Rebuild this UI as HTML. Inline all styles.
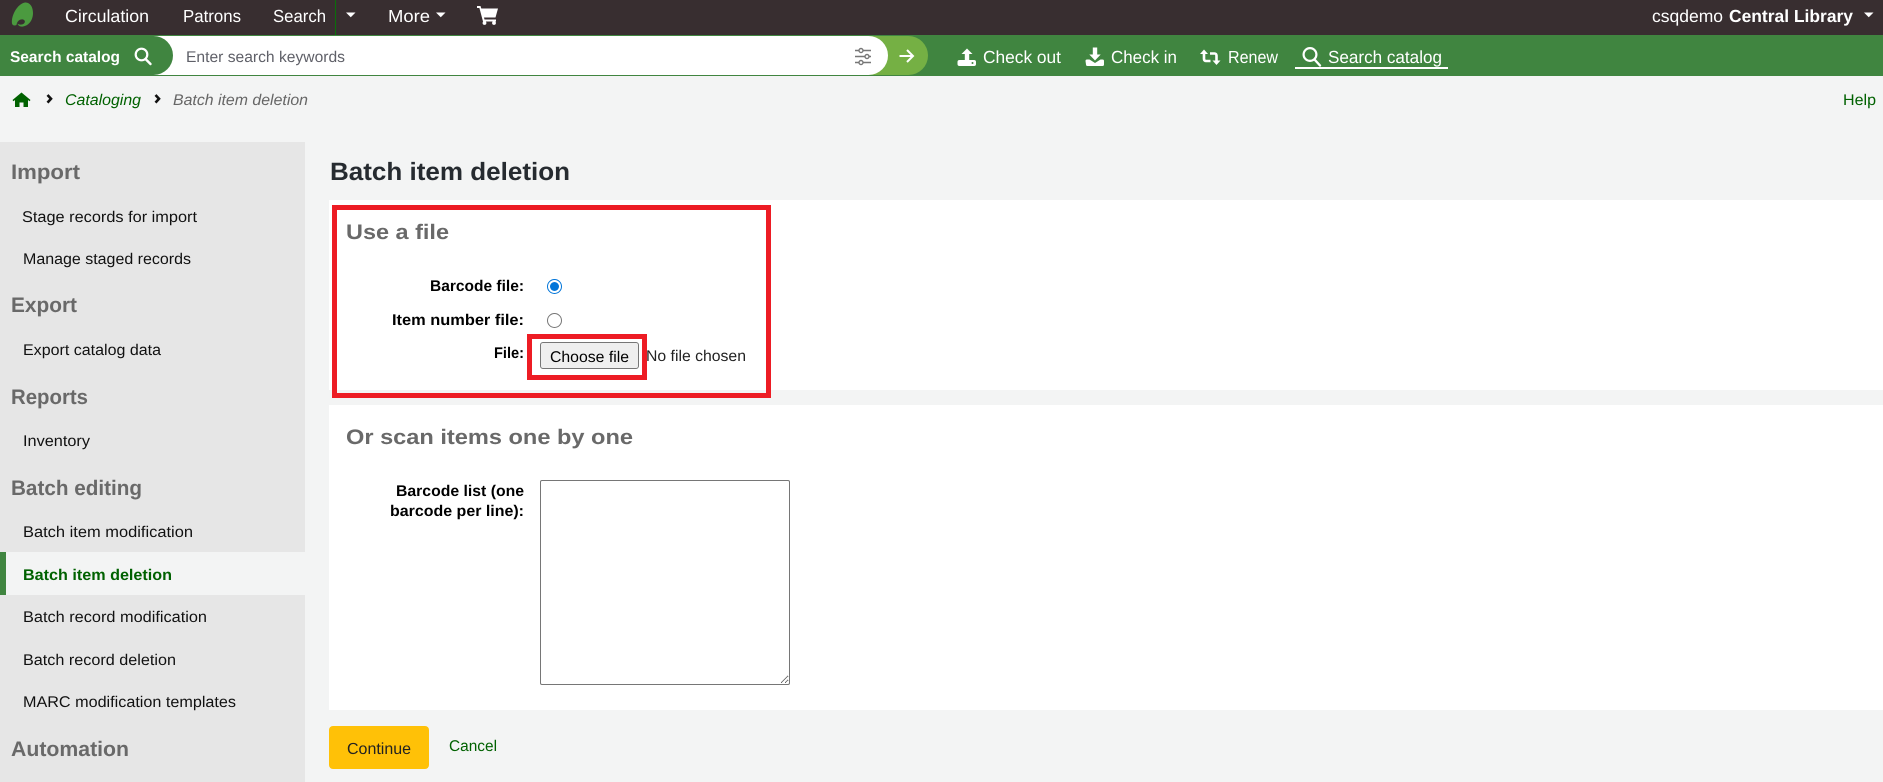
<!DOCTYPE html>
<html lang="en">
<head>
<meta charset="utf-8">
<title>Batch item deletion</title>
<style>
html,body{margin:0;padding:0;width:1883px;height:782px;overflow:hidden;background:#f3f4f4;font-family:"Liberation Sans",sans-serif}
.b{position:absolute}
svg.o{position:absolute;left:0;top:0;width:1883px;height:782px;z-index:5;pointer-events:none}
svg text{font-family:"Liberation Sans",sans-serif;text-rendering:geometricPrecision}
.w{fill:#fff}
.nav{font-size:17.5px}
.side{font-size:15.5px;fill:#111}
.h{font-size:21px;font-weight:700;fill:#696969}
.lab{font-size:15.5px;font-weight:700;fill:#000}
input[type=radio]{position:absolute;margin:0;width:15px;height:15px;accent-color:#0075d9}
textarea{position:absolute;left:540px;top:480px;width:250px;height:205px;box-sizing:border-box;margin:0;padding:2px;border:1px solid #767676;border-radius:2px;background:#fff}
</style>
</head>
<body>
<div class="b" style="left:0;top:0;width:1883px;height:35px;background:#382e30"></div>
<div class="b" style="left:335px;top:0;width:1px;height:35px;background:#0a700a"></div>
<div class="b" style="left:0;top:35px;width:1883px;height:41px;background:#408540"></div>
<div class="b" style="left:150px;top:36px;width:778px;height:39px;background:#75b044;border-radius:0 20px 20px 0"></div>
<div class="b" style="left:150px;top:36px;width:738px;height:39px;background:#fff;border-radius:0 20px 20px 0"></div>
<div class="b" style="left:0;top:36px;width:173px;height:39px;background:#408540;border-radius:0 20px 20px 0"></div>

<div class="b" style="left:0;top:142px;width:305px;height:640px;background:#e6e6e6"></div>
<div class="b" style="left:0;top:552px;width:305px;height:43px;background:#f3f4f4"></div>
<div class="b" style="left:0;top:552px;width:6px;height:43px;background:#408540"></div>

<div class="b" style="left:329px;top:200px;width:1554px;height:190px;background:#fff"></div>
<div class="b" style="left:329px;top:405px;width:1554px;height:305px;background:#fff"></div>

<input type="radio" name="f" checked style="left:547px;top:279px">
<input type="radio" name="f" style="left:547px;top:313px">
<div class="b" style="left:540px;top:342px;width:99px;height:27px;box-sizing:border-box;background:#efefef;border:1px solid #767676;border-radius:3px"></div>
<textarea></textarea>
<div class="b" style="left:329px;top:726px;width:100px;height:43px;background:#ffc107;border-radius:4px"></div>

<div class="b" style="left:332px;top:205px;width:439px;height:193px;box-sizing:border-box;border:5px solid #ed1c24;z-index:4"></div>
<div class="b" style="left:527px;top:334px;width:120px;height:46px;box-sizing:border-box;border:5px solid #ed1c24;z-index:4"></div>

<svg class="o" viewBox="0 0 1883 782" xmlns="http://www.w3.org/2000/svg">
  <!-- logo -->
  <path d="M25 2.500C30 2 33 7 33 13C33 20 29 25.500 23 26.500C20 27 18 25.500 17.500 23.500C19 25 22 25 24 23.500C25.500 22 25 20 23 19.500C19.500 19 17 21.500 16.500 25C14.500 26 12.500 25.500 12 23.500C11 16 17 4 25 2.500Z" fill="#4b9a3f"/>

  <!-- top nav -->
  <g class="w nav">
    <text x="65" y="22" textLength="84" lengthAdjust="spacingAndGlyphs">Circulation</text>
    <text x="183" y="22" textLength="58" lengthAdjust="spacingAndGlyphs">Patrons</text>
    <text x="273" y="22" textLength="53" lengthAdjust="spacingAndGlyphs">Search</text>
    <text x="388" y="22" textLength="42" lengthAdjust="spacingAndGlyphs">More</text>
    <text x="1652" y="22" textLength="71" lengthAdjust="spacingAndGlyphs">csqdemo</text>
    <text x="1729" y="22" textLength="124" lengthAdjust="spacingAndGlyphs" font-weight="700">Central Library</text>
  </g>
  <path d="M346 12.500h9.500l-4.750 4.750zM436 12.500h9.500l-4.750 4.750zM1864 12.500h9.500l-4.750 4.750z" fill="#fff"/>
  <!-- cart -->
  <path d="M477 6h3.500l.8 2.500H498l-2.500 9H484l.5 2H496v2H483l-3.600-13.500H477z" fill="#fff"/>
  <circle cx="484.500" cy="23" r="1.900" fill="#fff"/><circle cx="494" cy="23" r="1.900" fill="#fff"/>

  <!-- search bar -->
  <text x="10" y="62" textLength="110" lengthAdjust="spacingAndGlyphs" font-size="15.500" font-weight="700" fill="#fff">Search catalog</text>
  <circle cx="141.500" cy="54.500" r="5.800" fill="none" stroke="#fff" stroke-width="2.200"/>
  <path d="M145.500 59l5 5" stroke="#fff" stroke-width="2.400" stroke-linecap="round"/>
  <text x="186" y="62" textLength="159" lengthAdjust="spacingAndGlyphs" font-size="15.500" fill="#5f6068">Enter search keywords</text>
  <!-- sliders -->
  <g stroke="#777" stroke-width="1.400" fill="none">
    <path d="M855 50.500h16M855 56.500h16M855 62.500h16"/>
    <circle cx="861" cy="50.500" r="2" fill="#fff"/><circle cx="867" cy="56.500" r="2" fill="#fff"/><circle cx="861" cy="62.500" r="2" fill="#fff"/>
  </g>
  <path d="M899.500 56h13M907 50l6 6-6 6" fill="none" stroke="#fff" stroke-width="2"/>

  <!-- toolbar -->
  <g class="w" font-size="17.500">
    <text x="983" y="63" textLength="78" lengthAdjust="spacingAndGlyphs">Check out</text>
    <text x="1111" y="63" textLength="66" lengthAdjust="spacingAndGlyphs">Check in</text>
    <text x="1228" y="63" textLength="50" lengthAdjust="spacingAndGlyphs">Renew</text>
    <text x="1328" y="63" textLength="114" lengthAdjust="spacingAndGlyphs">Search catalog</text>
  </g>
  <!-- check out -->
  <path d="M967 48.500l5.500 5.500h-3.300v7h-4.400v-7h-3.300z" fill="#fff"/>
  <rect x="957.500" y="60" width="18.500" height="6" rx="2" fill="#fff"/><circle cx="972.500" cy="63" r="1" fill="#408540"/>
  <!-- check in -->
  <path d="M1092.800 47.500h4.400v7h3.500l-5.700 6-5.700-6h3.500z" fill="#fff"/>
  <path d="M1085.500 61a1.500 1.500 0 0 1 1.500-1.500h2.500l5.500 3.500 5.500-3.500h2a1.500 1.500 0 0 1 1.500 1.500v3.500a1.500 1.500 0 0 1-1.500 1.500h-15a1.500 1.500 0 0 1-1.500-1.500z" fill="#fff"/>
  <!-- renew -->
  <path d="M1204 52v7a2 2 0 0 0 2 2h4.500M1216.500 62.500v-7a2 2 0 0 0-2-2h-4.500" fill="none" stroke="#fff" stroke-width="2.600"/>
  <path d="M1200 54l4-4.500 4 4.500zM1212.500 60.500l4 4.500 4-4.500z" fill="#fff"/>
  <!-- search -->
  <circle cx="1310" cy="54.500" r="6.400" fill="none" stroke="#fff" stroke-width="2.200"/>
  <path d="M1314.500 59.500l5.500 6" stroke="#fff" stroke-width="2.400" stroke-linecap="round"/>
  <rect x="1295" y="67" width="153" height="2" fill="#fff"/>

  <!-- breadcrumb -->
  <path d="M21.500 92.500l9 7.500-1 1.200-1.500-1.200v7h-4.500v-4.500h-4v4.500H15v-7l-1.500 1.200-1-1.200z" fill="#006100"/>
  <path d="M47.500 95l3.500 3.800-3.500 3.800M155.500 95l3.500 3.800-3.500 3.800" fill="none" stroke="#111" stroke-width="2.600"/>
  <text x="65" y="105" textLength="76" lengthAdjust="spacingAndGlyphs" font-size="15.500" font-style="italic" fill="#006100">Cataloging</text>
  <text x="173" y="105" textLength="135" lengthAdjust="spacingAndGlyphs" font-size="15.500" font-style="italic" fill="#666">Batch item deletion</text>
  <text x="1843" y="105" textLength="33" lengthAdjust="spacingAndGlyphs" font-size="15.500" fill="#006100">Help</text>

  <!-- sidebar -->
  <text class="h" x="11" y="179" textLength="69" lengthAdjust="spacingAndGlyphs">Import</text>
  <text class="side" x="22" y="222" textLength="175" lengthAdjust="spacingAndGlyphs">Stage records for import</text>
  <text class="side" x="23" y="264" textLength="168" lengthAdjust="spacingAndGlyphs">Manage staged records</text>
  <text class="h" x="11" y="312" textLength="66" lengthAdjust="spacingAndGlyphs">Export</text>
  <text class="side" x="23" y="355" textLength="138" lengthAdjust="spacingAndGlyphs">Export catalog data</text>
  <text class="h" x="11" y="404" textLength="77" lengthAdjust="spacingAndGlyphs">Reports</text>
  <text class="side" x="23" y="446" textLength="67" lengthAdjust="spacingAndGlyphs">Inventory</text>
  <text class="h" x="11" y="495" textLength="131" lengthAdjust="spacingAndGlyphs">Batch editing</text>
  <text class="side" x="23" y="537" textLength="170" lengthAdjust="spacingAndGlyphs">Batch item modification</text>
  <text x="23" y="580" textLength="149" lengthAdjust="spacingAndGlyphs" font-size="15.500" font-weight="700" fill="#006100">Batch item deletion</text>
  <text class="side" x="23" y="622" textLength="184" lengthAdjust="spacingAndGlyphs">Batch record modification</text>
  <text class="side" x="23" y="665" textLength="153" lengthAdjust="spacingAndGlyphs">Batch record deletion</text>
  <text class="side" x="23" y="707" textLength="213" lengthAdjust="spacingAndGlyphs">MARC modification templates</text>
  <text class="h" x="11" y="756" textLength="118" lengthAdjust="spacingAndGlyphs">Automation</text>

  <!-- main -->
  <text x="330" y="180" textLength="240" lengthAdjust="spacingAndGlyphs" font-size="25" font-weight="700" fill="#262b30">Batch item deletion</text>
  <text class="h" x="346" y="239" textLength="103" lengthAdjust="spacingAndGlyphs" font-size="21">Use a file</text>
  <text class="lab" x="430" y="291" textLength="94" lengthAdjust="spacingAndGlyphs">Barcode file:</text>
  <text class="lab" x="392" y="325" textLength="132" lengthAdjust="spacingAndGlyphs">Item number file:</text>
  <text class="lab" x="494" y="358" textLength="30" lengthAdjust="spacingAndGlyphs">File:</text>
  <text x="550" y="362" textLength="79" lengthAdjust="spacingAndGlyphs" font-size="15.500" fill="#000">Choose file</text>
  <text x="646" y="361" textLength="100" lengthAdjust="spacingAndGlyphs" font-size="15.500" fill="#222">No file chosen</text>
  <text class="h" x="346" y="444" textLength="287" lengthAdjust="spacingAndGlyphs">Or scan items one by one</text>
  <text class="lab" x="396" y="496" textLength="128" lengthAdjust="spacingAndGlyphs">Barcode list (one</text>
  <text class="lab" x="390" y="516" textLength="134" lengthAdjust="spacingAndGlyphs">barcode per line):</text>
  <text x="347" y="754" textLength="64" lengthAdjust="spacingAndGlyphs" font-size="16" fill="#222">Continue</text>
  <text x="449" y="751" textLength="48" lengthAdjust="spacingAndGlyphs" font-size="15.500" fill="#006100">Cancel</text>
</svg>
</body>
</html>
